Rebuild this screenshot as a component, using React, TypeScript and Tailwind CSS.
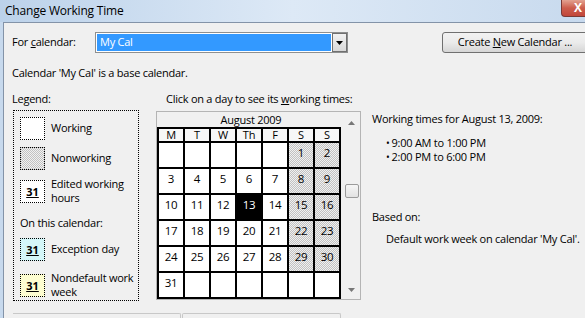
import React from 'react';

const weeks: (number | null)[][] = [
  [null, null, null, null, null, 1, 2],
  [3, 4, 5, 6, 7, 8, 9],
  [10, 11, 12, 13, 14, 15, 16],
  [17, 18, 19, 20, 21, 22, 23],
  [24, 25, 26, 27, 28, 29, 30],
  [31, null, null, null, null, null, null],
];

const dayNames = ['M', 'T', 'W', 'Th', 'F', 'S', 'S'];

const hatch =
  'bg-[image:repeating-conic-gradient(#c2c2c2_0_25%,#f0f0f0_0_50%)] bg-[length:2px_2px]';

function Swatch({ kind }: { kind: 'working' | 'nonworking' | 'edited' | 'exception' | 'nondefault' }) {
  const bg =
    kind === 'nonworking'
      ? hatch
      : kind === 'exception'
        ? 'bg-[#d4f6f8]'
        : kind === 'nondefault'
          ? 'bg-[#fdfdd0]'
          : 'bg-white';
  const showNum = kind === 'edited' || kind === 'exception' || kind === 'nondefault';
  return (
    <div
      className={`w-[25px] h-[23px] shrink-0 border border-dotted border-black flex items-center justify-center ${bg}`}
    >
      {showNum && <span className="text-[11px] font-bold underline leading-none tracking-normal">31</span>}
    </div>
  );
}

function UpArrow() {
  return (
    <svg width="7" height="4" viewBox="0 0 7 4">
      <path d="M0 4 L3.5 0 L7 4 Z" fill="#777" />
    </svg>
  );
}

function DownArrow() {
  return (
    <svg width="7" height="4" viewBox="0 0 7 4">
      <path d="M0 0 L3.5 4 L7 0 Z" fill="#777" />
    </svg>
  );
}

export default function App() {
  return (
    <div className="w-[585px] h-[318px] overflow-hidden bg-[#f0f0f0] font-['Open_Sans',sans-serif] text-[11px] tracking-[-0.25px] text-black whitespace-nowrap">
      {/* Title bar */}
      <div className="relative h-[22px] flex items-center pl-[5px] bg-gradient-to-r from-[#bcd2ea] via-[#dde9f6] to-[#c8daee]">
        <span className="text-[12px] tracking-[-0.2px] text-black">Change Working Time</span>
        <div className="absolute top-0 right-0 w-[24px] h-[17px] rounded-bl-[4px] border border-t-0 border-r-0 border-[#7a3a36] bg-gradient-to-b from-[#e2a291] via-[#cc5d4c] to-[#c2463a] flex items-center pl-[12px]">
          <span className="text-white font-bold text-[12px] leading-none">X</span>
        </div>
      </div>

      <div className="flex h-[296px]">
        {/* left window frame */}
        <div className="w-[3px] bg-[#c7d9ed] shrink-0" />
        <div className="flex-1 border-l border-t border-[#8393a8] bg-[#f0f0f0] pl-[8px]">
          {/* Row 1 */}
          <div className="flex items-center mt-[9px] h-[21px]">
            <span className="w-[83px] shrink-0">
              For <span className="underline">c</span>alendar:
            </span>
            <div className="flex w-[253px] h-[21px] shrink-0 border border-[#8e8f8f]">
              <div className="flex-1 border border-white bg-[#3399ff] text-white flex items-center pl-[3px]">
                My Cal
              </div>
              <div className="w-[15px] border border-[#707070] bg-gradient-to-b from-[#f2f2f2] to-[#d8d8d8] flex items-center justify-center">
                <svg width="7" height="4" viewBox="0 0 7 4">
                  <path d="M0 0 L3.5 4 L7 0 Z" fill="#000" />
                </svg>
              </div>
            </div>
            <button className="ml-[94px] w-[146px] h-[21px] shrink-0 rounded-[3px] border border-[#707070] bg-gradient-to-b from-[#f2f2f2] via-[#ebebeb] to-[#d6d6d6] text-center">
              Create <span className="underline">N</span>ew Calendar ...
            </button>
          </div>

          {/* Row 2 */}
          <div className="mt-[12px] leading-[16px]">Calendar 'My Cal' is a base calendar.</div>

          {/* Row 3 */}
          <div className="flex mt-[10px]">
            {/* Legend */}
            <div className="w-[127px] shrink-0">
              <div className="leading-[16px]">Legend:</div>
              <div className="mt-[3px] ml-[1px] w-[126px] h-[191px] border border-dotted border-black pl-[6px] pt-[6px]">
                <div className="flex items-center gap-[6px]">
                  <Swatch kind="working" />
                  <span>Working</span>
                </div>
                <div className="flex items-center gap-[6px] mt-[7px]">
                  <Swatch kind="nonworking" />
                  <span>Nonworking</span>
                </div>
                <div className="flex items-center gap-[6px] mt-[7px]">
                  <Swatch kind="edited" />
                  <span className="leading-[14px]">
                    Edited working
                    <br />
                    hours
                  </span>
                </div>
                <div className="mt-[10px] leading-[16px]">On this calendar:</div>
                <div className="flex items-center gap-[6px] mt-[7px]">
                  <Swatch kind="exception" />
                  <span>Exception day</span>
                </div>
                <div className="flex items-center gap-[6px] mt-[10px]">
                  <Swatch kind="nondefault" />
                  <span className="leading-[14px]">
                    Nondefault work
                    <br />
                    week
                  </span>
                </div>
              </div>
            </div>

            {/* Calendar */}
            <div className="ml-[17px] w-[205px] shrink-0">
              <div className="pl-[10px] leading-[16px]">
                Click on a day to see its <span className="underline">w</span>orking times:
              </div>
              <div className="mt-[4px] h-[189px] border border-[#b4b4b4] flex overflow-hidden">
                <div className="w-[184px] shrink-0">
                  <div className="h-[15px] leading-[15px] text-center pl-[4px]">August 2009</div>
                  <div className="border-l-2 border-t-2 border-black">
                    <div className="flex">
                      {dayNames.map((d, i) => (
                        <div
                          key={i}
                          className="w-[26px] h-[14px] border-r-2 border-b-2 border-black bg-[#f7f7f7] text-center leading-[12px]"
                        >
                          {d}
                        </div>
                      ))}
                    </div>
                    {weeks.map((week, r) => (
                      <div key={r} className="flex">
                        {week.map((day, c) => {
                          const selected = day === 13;
                          const nonworking = c >= 5 && r < 5;
                          return (
                            <div
                              key={c}
                              className={`w-[26px] h-[26px] border-r-2 border-b-2 border-black text-center pt-[3px] leading-[14px] text-[11.5px] ${
                                selected ? 'bg-black text-white' : nonworking ? hatch : 'bg-white'
                              }`}
                            >
                              {day ?? ''}
                            </div>
                          );
                        })}
                      </div>
                    ))}
                  </div>
                </div>
                {/* scrollbar */}
                <div className="flex-1 flex flex-col items-center">
                  <div className="mt-[9px] ml-[2px] flex">
                    <UpArrow />
                  </div>
                  <div className="mt-[59px] ml-[2px] w-[14px] h-[14px] rounded-[2px] border border-[#9b9b9b] bg-gradient-to-b from-[#f6f6f6] to-[#e2e2e2]" />
                  <div className="mt-[90px] ml-[2px] flex">
                    <DownArrow />
                  </div>
                </div>
              </div>
            </div>

            {/* Working times */}
            <div className="ml-[11px] pt-[20px]">
              <div className="leading-[16px]">Working times for August 13, 2009:</div>
              <ul className="mt-[9px] ml-[14px] leading-[13px]">
                <li>
                  <span className="text-[10px] mr-[2px]">•</span>9:00 AM to 1:00 PM
                </li>
                <li>
                  <span className="text-[10px] mr-[2px]">•</span>2:00 PM to 6:00 PM
                </li>
              </ul>
              <div className="mt-[45px] leading-[16px]">Based on:</div>
              <div className="mt-[6px] ml-[14px] leading-[16px]">Default work week on calendar 'My Cal'.</div>
            </div>
          </div>

          {/* Tabs */}
          <div className="flex mt-[12px] ml-[1px]">
            <div className="w-[168px] h-[10px] border-t border-r border-[#c8c8c8] rounded-tr-[2px]" />
            <div className="ml-[1px] w-[159px] h-[10px] border-t border-l border-r border-[#c8c8c8] rounded-t-[2px]" />
          </div>
        </div>
      </div>
    </div>
  );
}
